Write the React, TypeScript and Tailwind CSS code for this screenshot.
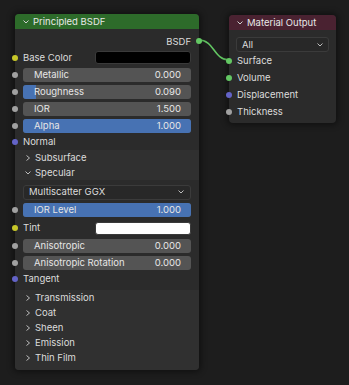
import React from "react";

const font = { fontFamily: "Inter, 'DejaVu Sans', sans-serif" };

function Socket({ color, side = "left" }: { color: string; side?: "left" | "right" }) {
  return (
    <span
      className={`absolute top-1/2 -translate-y-1/2 w-[6px] h-[6px] rounded-full ${side === "left" ? "left-[-3px]" : "right-[-3px]"}`}
      style={{ background: color }}
    />
  );
}

const GRAY = "#a1a1a1";
const YELLOW = "#c7c729";
const PURPLE = "#6363c7";
const GREEN = "#63c763";

function ChevronRight() {
  return (
    <svg width="8" height="8" viewBox="0 0 8 8" className="shrink-0">
      <path d="M2.5 1.5 L5.5 4 L2.5 6.5" stroke="#bdbdbd" strokeWidth="1" fill="none" />
    </svg>
  );
}
function ChevronDown({ color = "#bdbdbd" }: { color?: string }) {
  return (
    <svg width="8" height="8" viewBox="0 0 8 8" className="shrink-0">
      <path d="M1.5 2.5 L4 5 L6.5 2.5" stroke={color} strokeWidth="1" fill="none" />
    </svg>
  );
}

function Slider({ label, value, fill, socket = GRAY, h = "h-[17px]" }: { label: string; value: string; fill: number; socket?: string; h?: string }) {
  return (
    <div className={`relative ${h} flex items-center pl-[8px] pr-[8px]`}>
      <Socket color={socket} />
      <div className="relative flex-1 h-[14px] rounded-[3px] bg-[#545454] overflow-hidden flex items-center">
        <div className="absolute left-0 top-0 bottom-0 bg-[#4772b3]" style={{ width: `${fill * 100}%` }} />
        <span className="relative pl-[11px] flex-1 text-[#e6e6e6]">{label}</span>
        <span className="relative pr-[10px] text-[#e6e6e6]">{value}</span>
      </div>
    </div>
  );
}

function SocketLabel({ label, color, h = "h-[17px]" }: { label: string; color: string; h?: string }) {
  return (
    <div className={`relative ${h} flex items-center pl-[8px] text-[#dcdcdc]`}>
      <Socket color={color} />
      {label}
    </div>
  );
}

function ColorRow({ label, swatch, h = "h-[17px]" }: { label: string; swatch: string; h?: string }) {
  return (
    <div className={`relative ${h} flex items-center pl-[8px] pr-[8px] text-[#dcdcdc]`}>
      <Socket color={YELLOW} />
      <span className="flex-1">{label}</span>
      <div className="w-[96px] h-[13px] rounded-[3px] border border-[#3a3a3a]" style={{ background: swatch }} />
    </div>
  );
}

function PanelHeader({ label, open = false }: { label: string; open?: boolean }) {
  return (
    <div className="h-[15px] flex items-center pl-[9px] gap-[3px] text-[#dcdcdc]">
      {open ? <ChevronDown /> : <ChevronRight />}
      <span>{label}</span>
    </div>
  );
}

export default function App() {
  return (
    <div className="relative w-[349px] h-[385px] bg-[#1d1d1d] overflow-hidden text-[9.5px] leading-none" style={font}>
      {/* link */}
      <svg className="absolute left-0 top-0" width="349" height="385">
        <path d="M199 40 C 214 40, 214 60, 229 60" stroke={GREEN} strokeWidth="1.6" fill="none" />
      </svg>

      {/* Principled BSDF */}
      <div className="absolute left-[15px] top-[14px] w-[184px] h-[356px] rounded-[4px] bg-[#2b2b2b] shadow-[0_0_6px_2px_rgba(0,0,0,0.45)] flex flex-col">
        <div className="h-[15px] shrink-0 rounded-t-[4px] bg-[#2d6b2a] flex items-center pl-[7px] gap-[3px] text-[#e8e8e8]">
          <ChevronDown color="#d0d0d0" />
          <span>Principled BSDF</span>
        </div>
        <div className="h-[3px]" />
        <div className="relative h-[17px] flex items-center justify-end pr-[8px] pt-[2px] text-[#dcdcdc]">
          BSDF
          <Socket color={GREEN} side="right" />
        </div>
        <ColorRow label="Base Color" swatch="#000000" />
        <Slider label="Metallic" value="0.000" fill={0} />
        <Slider label="Roughness" value="0.090" fill={0.08} />
        <Slider label="IOR" value="1.500" fill={0} />
        <Slider label="Alpha" value="1.000" fill={1} />
        <SocketLabel label="Normal" color={PURPLE} h="h-[16px]" />
        <div className="bg-[#303030]">
          <PanelHeader label="Subsurface" />
          <PanelHeader label="Specular" open />
        </div>
        <div className="flex flex-col">
          <div className="h-[21px] flex items-center px-[8px] pt-[3px]">
            <div className="flex-1 h-[15px] rounded-[3px] bg-[#282828] border border-[#3b3b3b] flex items-center pl-[5px] pr-[5px] text-[#dcdcdc]">
              <span className="flex-1">Multiscatter GGX</span>
              <ChevronDown />
            </div>
          </div>
          <Slider label="IOR Level" value="1.000" fill={1} h="h-[18px]" />
          <ColorRow label="Tint" swatch="#ffffff" h="h-[18px]" />
          <Slider label="Anisotropic" value="0.000" fill={0} />
          <Slider label="Anisotropic Rotation" value="0.000" fill={0} />
          <SocketLabel label="Tangent" color={PURPLE} h="h-[15px]" />
        </div>
        <div className="h-[4px]" />
        <div className="flex-1 bg-[#303030] rounded-b-[4px] flex flex-col">
          <PanelHeader label="Transmission" />
          <PanelHeader label="Coat" />
          <PanelHeader label="Sheen" />
          <PanelHeader label="Emission" />
          <PanelHeader label="Thin Film" />
        </div>
      </div>

      {/* Material Output */}
      <div className="absolute left-[229px] top-[15px] w-[107px] h-[108px] rounded-[4px] bg-[#2b2b2b] shadow-[0_0_6px_2px_rgba(0,0,0,0.45)] flex flex-col">
        <div className="h-[15px] shrink-0 rounded-t-[4px] bg-[#4a2231] flex items-center pl-[7px] gap-[3px] text-[#e8e8e8]">
          <ChevronDown color="#d0d0d0" />
          <span>Material Output</span>
        </div>
        <div className="h-[7px]" />
        <div className="h-[15px] px-[7px] flex">
          <div className="flex-1 rounded-[3px] bg-[#282828] border border-[#3b3b3b] flex items-center pl-[5px] pr-[4px] text-[#dcdcdc]">
            <span className="flex-1">All</span>
            <ChevronDown />
          </div>
        </div>
        <SocketLabel label="Surface" color={GREEN} />
        <SocketLabel label="Volume" color={GREEN} />
        <SocketLabel label="Displacement" color={PURPLE} />
        <SocketLabel label="Thickness" color={GRAY} />
      </div>
    </div>
  );
}
